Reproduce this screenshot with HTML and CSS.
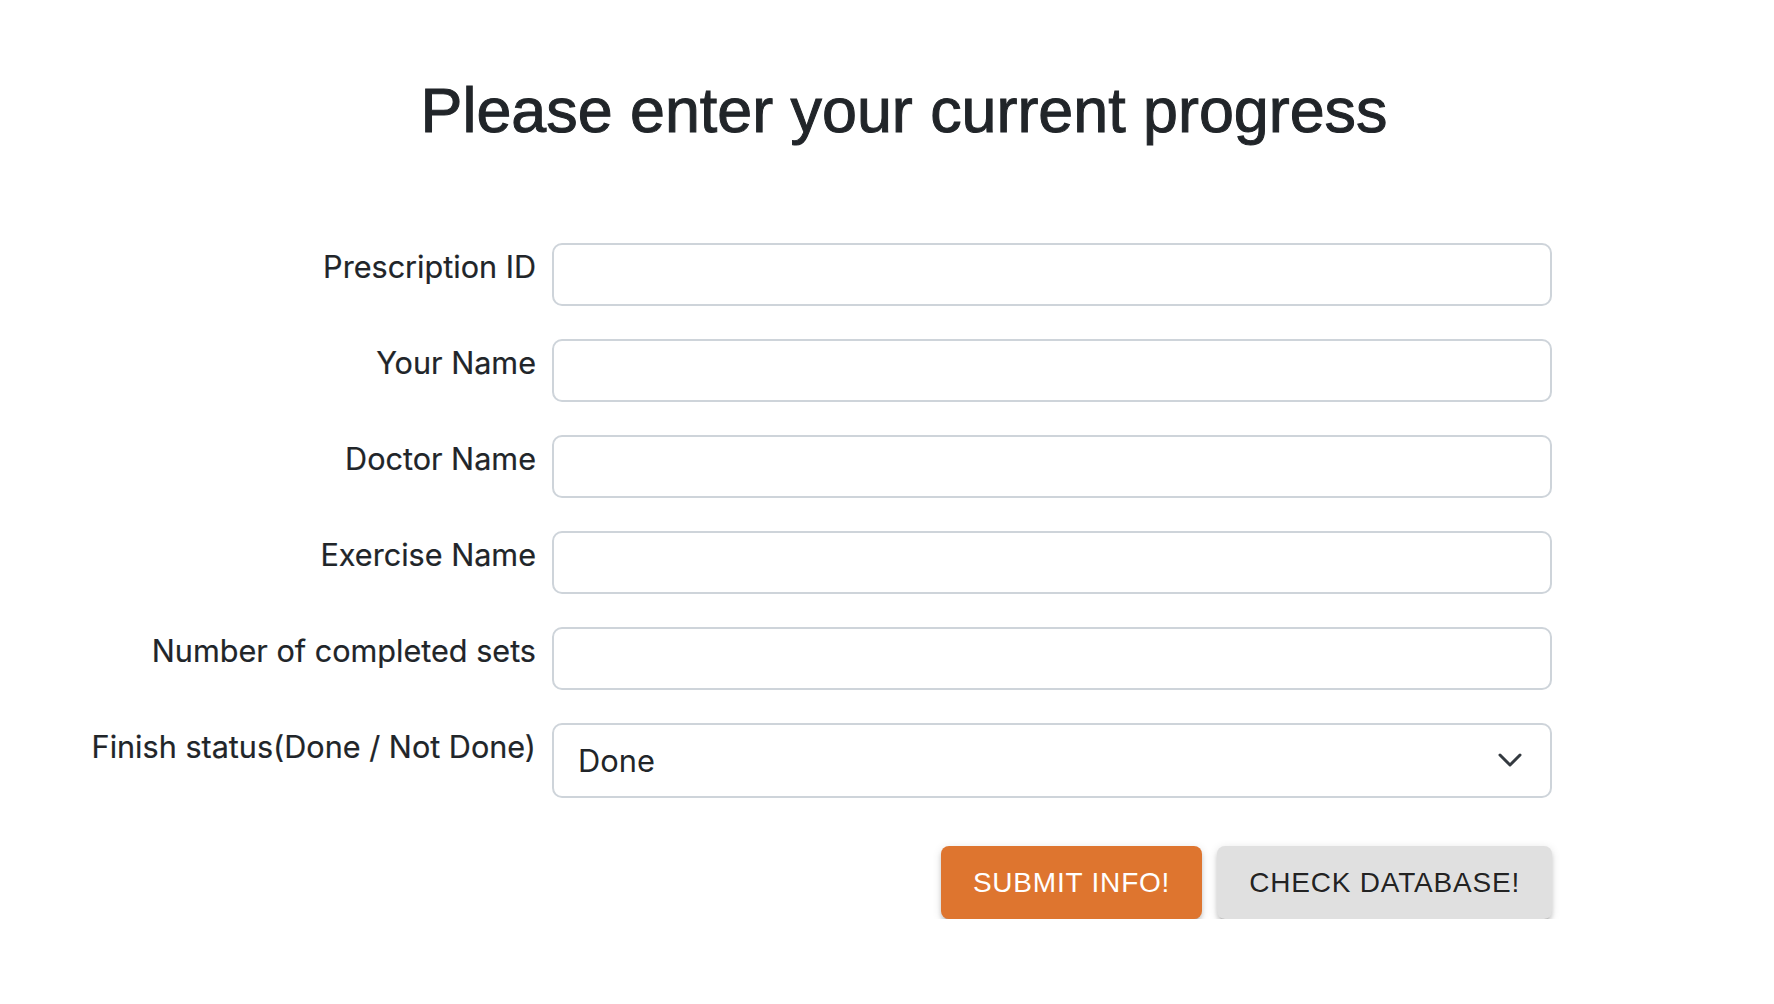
FILE: index.html
```html
<!DOCTYPE html>
<html lang="en">
<head>
<meta charset="utf-8">
<title>Progress</title>
<link rel="stylesheet" href="styles.css">
</head>
<body>
<main class="page">
  <h1 class="title">Please enter your current progress</h1>
  <form class="form">
    <label class="label" for="pid">Prescription ID</label>
    <input class="field" id="pid" type="text">
    <label class="label" for="yname">Your Name</label>
    <input class="field" id="yname" type="text">
    <label class="label" for="dname">Doctor Name</label>
    <input class="field" id="dname" type="text">
    <label class="label" for="ename">Exercise Name</label>
    <input class="field" id="ename" type="text">
    <label class="label" for="sets">Number of completed sets</label>
    <input class="field" id="sets" type="text">
    <label class="label" for="status">Finish status(Done / Not Done)</label>
    <div class="select-wrap">
      <select class="field select" id="status">
        <option>Done</option>
        <option>Not Done</option>
      </select>
      <svg class="chev" width="24" height="14" viewBox="0 0 24 14" aria-hidden="true"><polyline points="2,2 12,12 22,2" fill="none" stroke="#343a40" stroke-width="3" stroke-linecap="round" stroke-linejoin="round"/></svg>
    </div>
    <div class="actions">
      <button type="button" class="btn btn-primary">Submit Info!</button>
      <button type="button" class="btn btn-grey">Check Database!</button>
    </div>
  </form>
</main>
</body>
</html>
```

FILE: styles.css
```css
html, body {
  margin: 0;
  padding: 0;
  background: #ffffff;
}

.page {
  padding-top: 73px;
  color: #212529;
}

.title {
  margin: 0;
  padding-left: 34px;
  text-align: center;
  font-family: "Liberation Sans", Arial, sans-serif;
  font-weight: 400;
  font-size: 62.8px;
  line-height: 74px;
  -webkit-text-stroke: 1px #212529;
  color: #212529;
}

.form {
  margin-top: 96px;
  display: grid;
  grid-template-columns: 535px 1000px;
  column-gap: 17px;
  row-gap: 33px;
}

.label {
  justify-self: end;
  align-self: start;
  margin-right: -1px;
  font-family: Inter, "Noto Sans", sans-serif;
  font-size: 30.6px;
  line-height: 45px;
  padding-top: 1px;
  color: #212529;
  white-space: nowrap;
  -webkit-text-stroke: 0.2px #212529;
}

.field {
  box-sizing: border-box;
  width: 1000px;
  height: 63px;
  margin: 0;
  border: 2px solid #ced4da;
  border-radius: 10px;
  background: #ffffff;
  font-family: Inter, "Noto Sans", sans-serif;
  font-size: 30.8px;
  color: #212529;
  padding: 0 25px;
  outline: none;
}

.select-wrap {
  position: relative;
}

.select {
  height: 75px;
  appearance: none;
  -webkit-appearance: none;
  padding-top: 0;
  padding-left: 24px;
}

.chev {
  position: absolute;
  right: 30px;
  top: 30px;
  pointer-events: none;
}

.actions {
  grid-column: 2;
  margin-top: 15px;
  display: flex;
  justify-content: flex-end;
  gap: 15px;
}

.btn {
  border: 0;
  border-radius: 8px;
  padding: 12px 32px;
  font-family: "Liberation Sans", Arial, sans-serif;
  font-size: 28px;
  font-weight: 400;
  line-height: 49px;
  letter-spacing: 0.02857em;
  text-transform: uppercase;
  cursor: pointer;
  box-shadow: 0 6px 2px -4px rgba(0, 0, 0, 0.2), 0 4px 4px 0 rgba(0, 0, 0, 0.14), 0 2px 10px 0 rgba(0, 0, 0, 0.12);
}

.btn-primary {
  background: #de752f;
  color: #ffffff;
}

.btn-grey {
  background: #e0e0e0;
  color: rgba(0, 0, 0, 0.87);
}
```
